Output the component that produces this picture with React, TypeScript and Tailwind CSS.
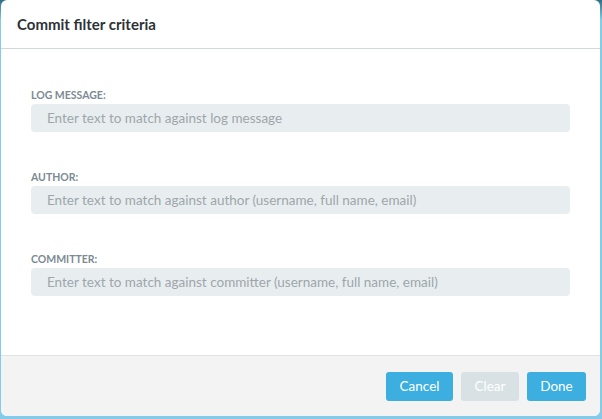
import React from "react";

const Field = ({ label, placeholder }: { label: string; placeholder: string }) => (
  <div className="flex flex-col">
    <div className="text-[10.5px] font-bold text-[#7b8a93] leading-[14px] mb-[2px]">{label}</div>
    <div className="h-[28px] rounded-[4px] bg-[#e8eef0] flex items-center pl-[16px] text-[13.5px] text-[#9ea6aa]">
      {placeholder}
    </div>
  </div>
);

export default function App() {
  return (
    <div
      className="w-[602px] h-[419px] bg-[#82cbea] relative overflow-hidden"
      style={{ fontFamily: "Lato, 'Noto Sans', sans-serif" }}
    >
      <div className="absolute left-0 top-0 w-full h-[20px] bg-gradient-to-b from-[#2b6f88] to-[#82cbea]" />
      <div className="absolute left-[1px] right-[2px] top-0 bottom-[3px] bg-white rounded-[6px] overflow-hidden flex flex-col">
        <div className="h-[49px] border-b border-[#d3d8da] flex items-center pl-[16px]">
          <span className="text-[15px] font-bold text-[#2d3236]">Commit filter criteria</span>
        </div>
        <div className="flex-1 flex flex-col gap-[38px] px-[30px] pt-[39px]">
          <Field label="LOG MESSAGE:" placeholder="Enter text to match against log message" />
          <Field label="AUTHOR:" placeholder="Enter text to match against author (username, full name, email)" />
          <Field label="COMMITTER:" placeholder="Enter text to match against committer (username, full name, email)" />
        </div>
        <div className="h-[61px] border-t border-[#e0e3e4] bg-[#f3f3f3] flex items-start justify-end gap-[8px] pr-[14px] pt-[16px]">
          <button className="h-[29px] w-[67px] rounded-[3px] bg-[#3caee0] text-white text-[13.5px]">Cancel</button>
          <button className="h-[29px] w-[58px] rounded-[3px] bg-[#d8e2e5] text-white text-[13.5px]">Clear</button>
          <button className="h-[29px] w-[59px] rounded-[3px] bg-[#3caee0] text-white text-[13.5px]">Done</button>
        </div>
      </div>
    </div>
  );
}
